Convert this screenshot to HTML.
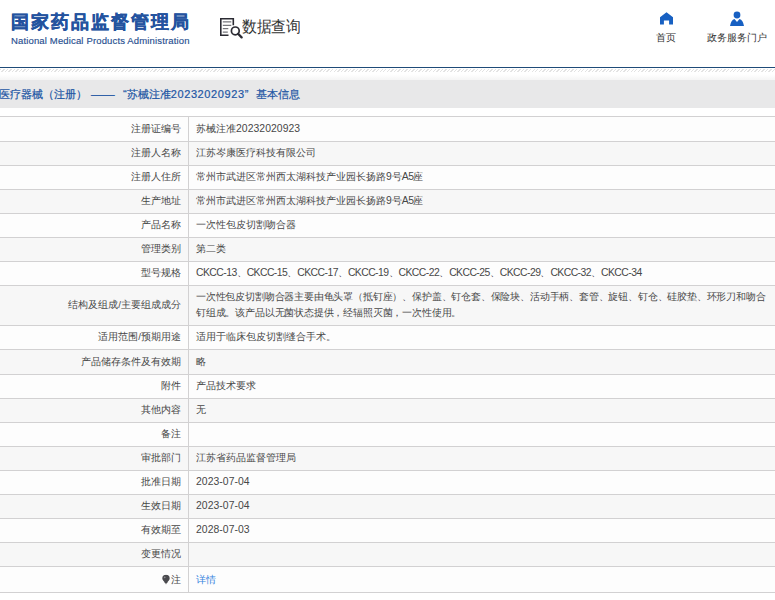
<!DOCTYPE html>
<html><head><meta charset="utf-8">
<style>
*{margin:0;padding:0;box-sizing:border-box}
html,body{width:775px;height:600px;overflow:hidden;background:#fff;font-family:"Liberation Sans",sans-serif;color:#333}
#logo1{position:absolute;left:11px;top:10px;font-size:18px;letter-spacing:1.95px;font-weight:bold;color:#24539f;-webkit-text-stroke:0.35px #24539f;white-space:nowrap;line-height:24px}
#logo2{position:absolute;left:11px;top:35px;font-size:9.5px;letter-spacing:0.15px;color:#284f90;-webkit-text-stroke:0.15px #284f90;white-space:nowrap;line-height:12px}
#sj{position:absolute;left:219px;top:17px}
#sjt{position:absolute;left:242px;top:16px;font-size:15px;letter-spacing:-0.5px;color:#333;white-space:nowrap;line-height:20px;transform:scaleY(1.08);transform-origin:0 0}
.nav{position:absolute;font-size:10px;color:#333;white-space:nowrap;line-height:12px}
#line{position:absolute;left:0;top:67px;width:775px;height:1px;background:#1f4b78}
#hatch{position:absolute;left:0;top:69px;width:775px;height:3px;background:repeating-linear-gradient(-45deg,#fff 0,#fff 1.5px,#e3e3e3 1.5px,#e3e3e3 2.5px)}
#grad{position:absolute;left:0;top:72px;width:775px;height:8px;background:linear-gradient(#fff 0,#fff 30%,#f5f5f5 100%)}
#bar{position:absolute;left:0;top:80px;width:775px;height:28px;background:#e8e8e9;font-size:11px;color:#1d56a4;-webkit-text-stroke:0.2px #1d56a4;text-indent:-1px;line-height:28px;white-space:nowrap}
.r{position:absolute;left:0;width:775px;border-top:1px solid #d2d1d2;border-bottom:1px solid #d2d1d2;font-size:9.8px;color:#474747}
.l{position:absolute;left:0;top:0;bottom:0;width:189px;border-right:1px solid #d2d1d2;text-align:right;padding-right:7px;display:flex;align-items:center;justify-content:flex-end;white-space:nowrap}
.l>span.t{transform:translateY(-0.5px)}
.v>div{transform:translateY(-1.5px)}
.v{position:absolute;left:196px;top:0;bottom:0;right:0;display:flex;align-items:center;line-height:16px;white-space:nowrap}
.lat{font-size:10.4px;letter-spacing:-0.55px}
.dig{font-size:10.4px;letter-spacing:0.05px}
#dash{margin-left:5px;display:inline-block;transform:scaleX(1.08);transform-origin:left}
#q{margin-left:10px}
#jb{margin-left:8px}
.lnk{color:#3584de}
.pin{display:inline-block;margin-right:1px;position:relative;top:2px}
</style></head><body>
<div id="logo1">国家药品监督管理局</div>
<div id="logo2">National Medical Products Administration</div>
<svg id="sj" width="24" height="23" viewBox="0 0 24 23">
 <path d="M9.5 18.3 H1.8 V1.8 H14.3 V8.2" fill="none" stroke="#2b2b33" stroke-width="1.6"/>
 <path d="M3.8 4.9 H12.3 M3.8 8.3 H12.3 M3.8 11.7 H9.3 M3.8 15.1 H8.8" stroke="#55555c" stroke-width="1"/>
 <circle cx="16.3" cy="13.9" r="3.9" fill="none" stroke="#2b2b33" stroke-width="1.7"/>
 <path d="M19.1 16.8 L22.6 20.4" stroke="#2b2b33" stroke-width="2.3" stroke-linecap="round"/>
</svg>
<div id="sjt">数据查询</div>
<svg class="nav" style="left:660px;top:12px" width="13" height="13" viewBox="0 0 13 13"><path d="M6.5 0.2 L13 5.3 V12.6 H9.1 V8.6 H3.9 V12.6 H0 V5.3 Z" fill="#1760c2"/></svg>
<div class="nav" style="left:656px;top:32px">首页</div>
<svg class="nav" style="left:730px;top:11px" width="14" height="15" viewBox="0 0 14 15"><circle cx="7" cy="4" r="3.4" fill="#1760c2"/><path d="M0 15 Q1 9 4.5 8 L7 11 L9.5 8 Q13 9 14 15 Z" fill="#1760c2"/></svg>
<div class="nav" style="left:707px;top:32px">政务服务门户</div>
<div id="line"></div>
<div id="hatch"></div><div id="grad"></div>
<div id="bar">医疗器械（注册）<span id="dash">——</span><span id="q">“苏械注准<span style="letter-spacing:0.62px">20232020923</span>”</span><span id="jb">基本信息</span></div>
<div class="r" style="top:116px;height:26px;background:#fdfdfd"><div class="l"><span class="t">注册证编号</span></div><div class="v"><div style="transform:translateY(-0.5px)">苏械注准<span class="dig">20232020923</span></div></div></div>
<div class="r" style="top:141px;height:25px;background:#f7f7f7"><div class="l"><span class="t">注册人名称</span></div><div class="v"><div>江苏岑康医疗科技有限公司</div></div></div>
<div class="r" style="top:165px;height:25px;background:#fdfdfd"><div class="l"><span class="t">注册人住所</span></div><div class="v"><div>常州市武进区常州西太湖科技产业园长扬路<span class="dig">9</span>号<span class="lat">A5</span>座</div></div></div>
<div class="r" style="top:189px;height:25px;background:#f7f7f7"><div class="l"><span class="t">生产地址</span></div><div class="v"><div>常州市武进区常州西太湖科技产业园长扬路<span class="dig">9</span>号<span class="lat">A5</span>座</div></div></div>
<div class="r" style="top:213px;height:25px;background:#fdfdfd"><div class="l"><span class="t">产品名称</span></div><div class="v"><div>一次性包皮切割吻合器</div></div></div>
<div class="r" style="top:237px;height:25px;background:#f7f7f7"><div class="l"><span class="t">管理类别</span></div><div class="v"><div>第二类</div></div></div>
<div class="r" style="top:261px;height:25px;background:#fdfdfd"><div class="l"><span class="t">型号规格</span></div><div class="v"><div><span class="lat">CKCC-13</span>、<span class="lat">CKCC-15</span>、<span class="lat">CKCC-17</span>、<span class="lat">CKCC-19</span>、<span class="lat">CKCC-22</span>、<span class="lat">CKCC-25</span>、<span class="lat">CKCC-29</span>、<span class="lat">CKCC-32</span>、<span class="lat">CKCC-34</span></div></div></div>
<div class="r" style="top:285px;height:41px;background:#f7f7f7"><div class="l"><span class="t">结构及组成/主要组成成分</span></div><div class="v"><div style="letter-spacing:-0.18px">一次性包皮切割吻合器主要由龟头罩（抵钉座）、保护盖、钉仓套、保险块、活动手柄、套管、旋钮、钉仓、硅胶垫、环形刀和吻合<br>钉组成。该产品以无菌状态提供，经辐照灭菌，一次性使用。</div></div></div>
<div class="r" style="top:325px;height:25px;background:#fdfdfd"><div class="l"><span class="t">适用范围/预期用途</span></div><div class="v"><div>适用于临床包皮切割缝合手术。</div></div></div>
<div class="r" style="top:349px;height:26px;background:#f7f7f7"><div class="l"><span class="t">产品储存条件及有效期</span></div><div class="v"><div style="transform:translateY(-0.5px)">略</div></div></div>
<div class="r" style="top:374px;height:25px;background:#fdfdfd"><div class="l"><span class="t">附件</span></div><div class="v"><div>产品技术要求</div></div></div>
<div class="r" style="top:398px;height:25px;background:#f7f7f7"><div class="l"><span class="t">其他内容</span></div><div class="v"><div>无</div></div></div>
<div class="r" style="top:422px;height:25px;background:#fdfdfd"><div class="l"><span class="t">备注</span></div><div class="v"><div></div></div></div>
<div class="r" style="top:446px;height:25px;background:#f7f7f7"><div class="l"><span class="t">审批部门</span></div><div class="v"><div>江苏省药品监督管理局</div></div></div>
<div class="r" style="top:470px;height:25px;background:#fdfdfd"><div class="l"><span class="t">批准日期</span></div><div class="v"><div><span class="dig">2023-07-04</span></div></div></div>
<div class="r" style="top:494px;height:25px;background:#f7f7f7"><div class="l"><span class="t">生效日期</span></div><div class="v"><div><span class="dig">2023-07-04</span></div></div></div>
<div class="r" style="top:518px;height:25px;background:#fdfdfd"><div class="l"><span class="t">有效期至</span></div><div class="v"><div><span class="dig">2028-07-03</span></div></div></div>
<div class="r" style="top:542px;height:25px;background:#f7f7f7"><div class="l"><span class="t">变更情况</span></div><div class="v"><div></div></div></div>
<div class="r" style="top:566px;height:27px;background:#fdfdfd"><div class="l"><span class="t"><svg class="pin" width="8" height="10" viewBox="0 0 8 10"><path d="M4 0.3 A3.7 3.7 0 0 1 7.7 4 C7.7 5.6 6.2 6.6 5.6 7.4 L5.3 8.6 H2.7 L2.4 7.4 C1.8 6.6 0.3 5.6 0.3 4 A3.7 3.7 0 0 1 4 0.3 Z" fill="#4a4a4e"/><path d="M3 9.2 H5" stroke="#888" stroke-width="0.9"/><circle cx="2.7" cy="2.8" r="0.9" fill="#8a8a90"/></svg>注</span></div><div class="v"><div style="transform:translateY(-0.5px)"><span class="lnk">详情</span></div></div></div>
</body></html>
